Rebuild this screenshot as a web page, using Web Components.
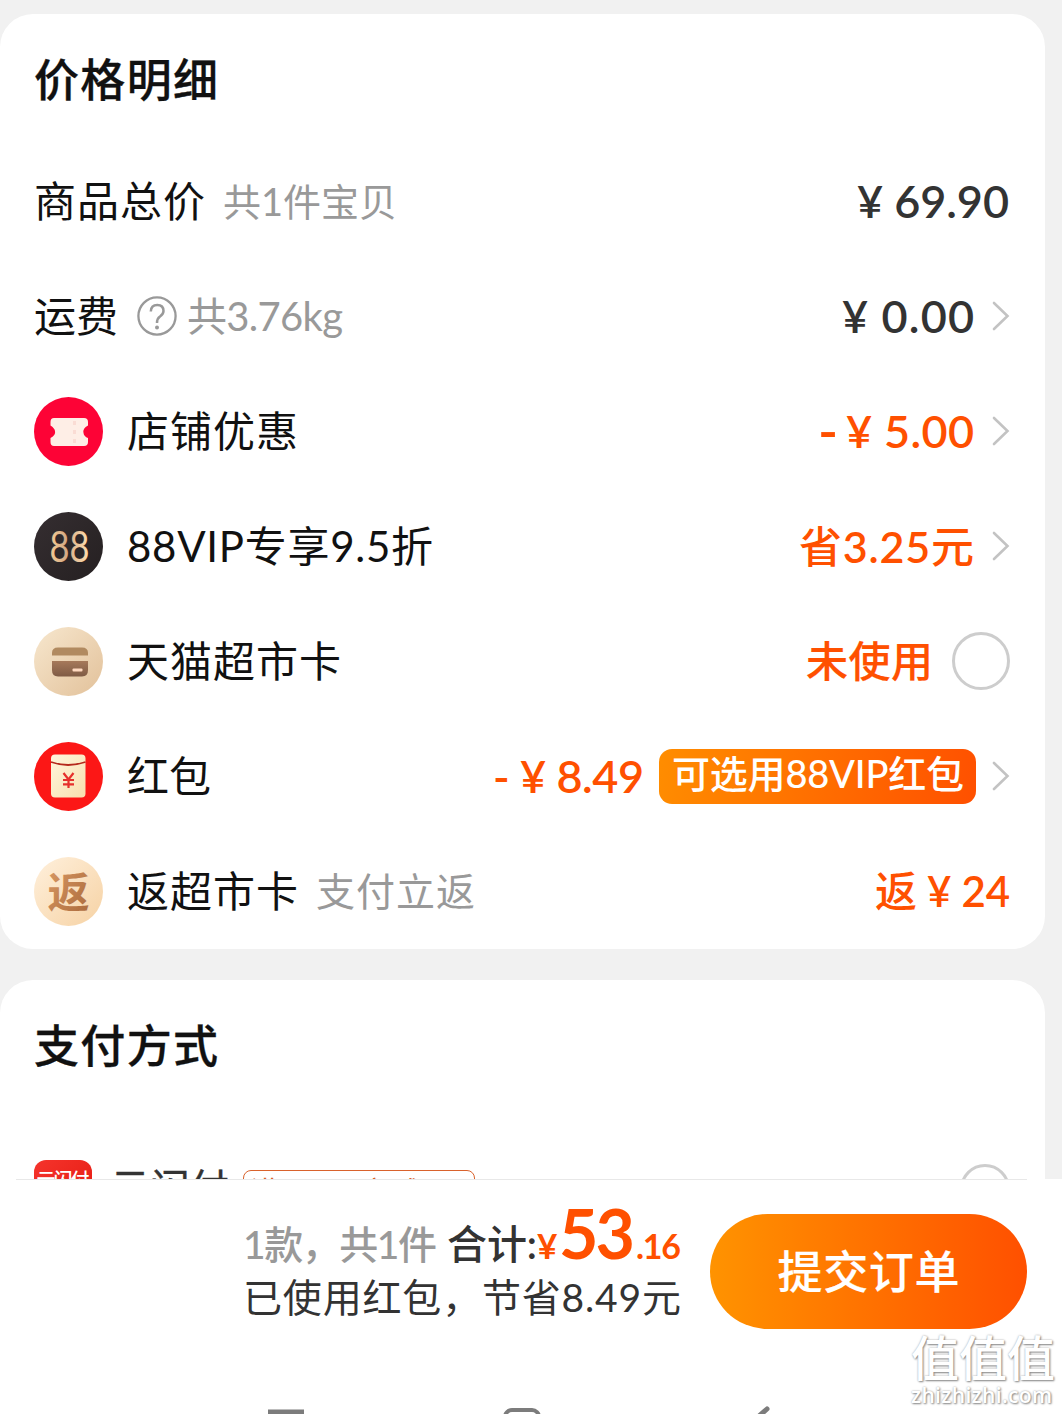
<!DOCTYPE html>
<html lang="zh-CN">
<head>
<meta charset="utf-8">
<title>确认订单</title>
<style>
html,body{margin:0;height:1414px;overflow:hidden;background:#f1f1f1}
body{font-family:Lato,"Noto Sans CJK SC",sans-serif;color:#111}
</style>
</head>
<body>
<order-page></order-page>
<script>
const define=(name,html,setup)=>customElements.define(name,class extends HTMLElement{
  connectedCallback(){
    if(this.shadowRoot)return;
    const t=document.createElement('template');t.innerHTML=html;
    this.attachShadow({mode:'open'}).append(t.content.cloneNode(true));
    if(setup)setup(this,this.shadowRoot);
  }
});

/* A line of text whose tracking is spread over the width in the "w" attribute.
   "bold" thickens the strokes by that many pixels. */
define('fit-text',`<style>
:host{display:block;flex:none;white-space:pre;line-height:1}
span{display:inline-block;white-space:pre}
::slotted(b){font-weight:600}
</style><span><slot></slot></span>`,(el,root)=>{
  const s=root.querySelector('span');
  const w=+el.getAttribute('w');
  el.style.fontSize=el.getAttribute('size')+'px';
  if(el.hasAttribute('weight'))el.style.fontWeight=el.getAttribute('weight');
  if(el.hasAttribute('bold'))el.style.webkitTextStroke=el.getAttribute('bold')+'px currentColor';
  const n=[...el.textContent].length;
  const ls=n>1?(w-s.getBoundingClientRect().width)/(n-1):0;
  s.style.letterSpacing=ls+'px';
  s.style.marginRight=-ls+'px';
  el.style.width=w+'px';
});

define('round-icon',`<style>:host{display:block;flex:none;width:69px;height:69px;margin-right:24px}svg{display:block}</style><div></div>`,(el,root)=>{
  const art={
    coupon:`<circle cx="34.5" cy="34.5" r="34.5" fill="#fd0336"/>
      <path d="M20 21H50Q54 21 54 25V28.500Q48.500 31 49.500 36Q50 39.500 54 41V45Q54 49 50 49H20Q16.500 49 16.500 45V41Q22 38 21 34Q20.500 31 16.500 28.500V25Q16.500 21 20 21Z" fill="#feeee6"/>
      <path d="M40.500 24V46" stroke="#fadcd4" stroke-width="3" stroke-dasharray="4 5"/>`,
    vip:`<defs><linearGradient id="g" x2="1" y2="1"><stop stop-color="#352e31"/><stop offset="1" stop-color="#252021"/></linearGradient>
      <linearGradient id="h" x2="1" y2="0"><stop stop-color="#f5cc93"/><stop offset=".4" stop-color="#d5aa86"/><stop offset="1" stop-color="#ffdfb0"/></linearGradient></defs>
      <circle cx="34.5" cy="34.5" r="34.5" fill="url(#g)"/>
      <text transform="translate(35.5 50) scale(.8 1)" text-anchor="middle" font-family="Lato" font-size="43" fill="url(#h)">88</text>`,
    card:`<defs><linearGradient id="g" x2="1" y2="1"><stop stop-color="#f7e7ce"/><stop offset="1" stop-color="#e2c19a"/></linearGradient>
      <linearGradient id="h" x2="0" y2="1"><stop stop-color="#a6795a"/><stop offset="1" stop-color="#7f5b45"/></linearGradient></defs>
      <circle cx="34.5" cy="34.5" r="34.5" fill="url(#g)"/>
      <path d="M18 28.500V26Q18 20.500 24 20.500H48Q54 20.500 54 26V28.500Z" fill="#b18a60"/>
      <path d="M18 34H54V43Q54 49.500 48 49.500H24Q18 49.500 18 43Z" fill="url(#h)"/>
      <rect x="38.500" y="41.500" width="10" height="3" rx="1" fill="#ffd9c0"/>`,
    packet:`<defs><linearGradient id="g" x2="1" y2="1"><stop stop-color="#fff6dd"/><stop offset="1" stop-color="#f8dfae"/></linearGradient></defs>
      <circle cx="34.5" cy="34.5" r="34.5" fill="#fc1716"/>
      <rect x="17" y="12.500" width="34.500" height="43" rx="4" fill="url(#g)"/>
      <path d="M17 20Q34 26 51.500 20" fill="none" stroke="#b5281c" stroke-width="1.800"/>
      <path d="M29.500 31L34.500 37.500L39.500 31M34.500 37V46M29 38H40M29 42.300H40" fill="none" stroke="#e6302c" stroke-width="2.200"/>`,
    back:`<defs><linearGradient id="g" x2="1" y2="1"><stop stop-color="#fff0dc"/><stop offset="1" stop-color="#f6d2a4"/></linearGradient>
      <linearGradient id="h" x2="1" y2="1"><stop stop-color="#dc9c66"/><stop offset="1" stop-color="#a9683a"/></linearGradient></defs>
      <circle cx="34.5" cy="34.5" r="34.5" fill="url(#g)"/>
      <text x="34.5" y="50.5" text-anchor="middle" font-family="Noto Sans CJK SC" font-weight="700" font-size="42" fill="url(#h)">返</text>`
  };
  root.querySelector('div').innerHTML='<svg width="69" height="69" viewBox="0 0 69 69">'+art[el.getAttribute('kind')]+'</svg>';
});

define('chevron-icon',`<style>:host{display:block;flex:none;margin-left:18px}svg{display:block}</style>
<svg width="18" height="32" viewBox="0 0 18 32"><path d="M2 3L15.500 16L2 29" fill="none" stroke="#c3c3c3" stroke-width="2.600" stroke-linecap="round"/></svg>`);

define('help-icon',`<style>:host{display:block;flex:none;margin:0 10px 0 19px}svg{display:block}</style>
<svg width="40" height="40" viewBox="0 0 40 40" fill="none" stroke="#999"><circle cx="20" cy="20" r="18.600" stroke-width="2.300"/><path d="M13.800 15.500Q14 9 20.300 9Q26.500 9 26.500 15Q26.500 18 23 20.500Q20 22.500 20 27" stroke-width="2.500"/><circle cx="20" cy="31.500" r="2" fill="#999" stroke="none"/></svg>`);

define('radio-dot',`<style>:host{display:block;flex:none;box-sizing:border-box;width:58px;height:58px;border:3px solid #cdcdcd;border-radius:50%;margin-left:19px}</style>`);

define('price-row',`<style>
:host{display:flex;height:115px;align-items:center;justify-content:space-between}
div{display:flex;align-items:center}
.end{color:var(--end,#ff5000)}
::slotted(.sub){color:#999;margin-left:18px}
</style><div><slot></slot></div><div class="end"><slot name="end"></slot></div>`);

define('end-group',`<style>:host{display:flex;align-items:center}</style><slot></slot>`);

define('promo-tag',`<style>:host{display:flex;box-sizing:border-box;width:317px;height:55px;margin-left:15px;padding:5px 0 0 13px;border-radius:13px;background:linear-gradient(100deg,#ff8d00,#ff5000);color:#fff}</style><slot></slot>`);

define('panel-card',`<style>
:host{display:block;box-sizing:border-box;width:1045px;background:#fff;border-radius:33px;padding:0 35px 0 34px}
header{display:flex;align-items:center;height:132px;margin-bottom:-2.500px}
</style><header><slot name="title"></slot></header><slot></slot>`);

define('pay-row',`<style>
:host{display:flex;align-items:flex-start;height:60px;padding-top:51px}
.logo{width:58px;height:58px;border-radius:12px;background:linear-gradient(135deg,#f5342c,#e3180f);color:#fff;display:flex;justify-content:center;padding-top:10px;box-sizing:border-box}
.name{color:#333;margin:8px 0 0 18px}
.tag{box-sizing:border-box;width:232px;height:46px;margin:10px 0 0 14px;padding:5px 0 0 6px;border:1px solid #d9622c;border-radius:8px;color:#d9622c}
.radio{box-sizing:border-box;width:50px;height:50px;border:3px solid #cdcdcd;border-radius:50%;margin:4px 0 0 auto}
</style>
<div class="logo"><fit-text w="53" size="19" weight="500">云闪付</fit-text></div>
<fit-text class="name" w="119" size="40" bold=".4">云闪付</fit-text>
<div class="tag"><fit-text w="216" size="30">满100元立减1元</fit-text></div>
<div class="radio"></div>`);

define('submit-button',`<style>
:host{display:block;flex:none}
button{all:unset;display:flex;box-sizing:border-box;padding-top:1px;align-items:center;justify-content:center;width:317px;height:115px;border-radius:58px;background:linear-gradient(90deg,#ff9300,#ff5000);color:#fff}
</style><button><slot></slot></button>`);

define('order-bar',`<style>
:host{display:flex;flex-direction:column;justify-content:space-between;height:235px;background:#fff}
.line{height:1px;background:#e8e8e8;margin:0 35px 0 16px}
.main{display:flex;justify-content:flex-end;padding:34px 35px 0 0;height:116px}
.sum{display:flex;flex-direction:column;width:467px;color:#333}
.total{display:flex;align-items:baseline;height:62px;margin-top:-15px}
.gray{color:#999}.or{color:#ff5000}
.nav{display:flex;height:8px;overflow:hidden;margin-top:auto}
svg{display:block}
</style>
<div class="line"></div>
<div class="main">
  <div class="sum">
    <div class="total">
      <fit-text class="gray" w="194" size="39" weight="500">1款，共1件</fit-text>
      <fit-text w="90" size="40" weight="500" style="margin-left:10px">合计<b>:</b></fit-text>
      <fit-text class="or" w="22" size="35" weight="700">¥</fit-text>
      <fit-text class="or" w="76" size="68" weight="700">53</fit-text>
      <fit-text class="or" w="45" size="34" weight="700" style="margin-left:1px">.16</fit-text>
    </div>
    <fit-text w="438" size="39" style="margin-top:17px">已使用红包，节省8.49元</fit-text>
  </div>
  <submit-button><fit-text w="182" size="45" weight="500" bold=".2">提交订单</fit-text></submit-button>
</div>
<div class="nav"><svg width="1062" height="8" viewBox="0 0 1062 8" fill="none" stroke="#7c7c7c" stroke-width="4"><path d="M268 6H304" stroke-width="5"/><rect x="505" y="4" width="34" height="34" rx="7"/><path d="M767 3L750 18" stroke-width="5" stroke-linecap="round"/></svg></div>`);

define('site-watermark',`<style>
:host{position:absolute;left:911px;top:1334px;width:150px;color:#fff;text-shadow:1px 1px 2px #888,0 0 2px #aaa}
div{display:flex;flex-direction:column;gap:3px}
.url{font-family:"Open Sans",sans-serif}
</style><div><fit-text w="144" size="48" weight="500">值值值</fit-text><fit-text class="url" w="141" size="21" weight="600">zhizhizhi.com</fit-text></div>`);

define('order-page',`<style>
:host{display:flex;flex-direction:column;position:relative;width:1062px;height:1414px;overflow:hidden}
main{display:flex;flex-direction:column;gap:31px;height:1165px;padding-top:14px;overflow:hidden}
panel-card{flex:none}
.dark{--end:#333}
</style>
<main>
<panel-card>
  <fit-text slot="title" w="184" size="45" weight="500" bold=".3">价格明细</fit-text>
  <price-row class="dark"><fit-text w="171" size="42">商品总价</fit-text><fit-text class="sub" w="174" size="38">共1件宝贝</fit-text>
    <end-group slot="end"><fit-text w="152" size="45" weight="600" style="margin-right:1px">¥ 69.90</fit-text></end-group></price-row>
  <price-row class="dark"><fit-text w="84" size="42">运费</fit-text><help-icon></help-icon><fit-text style="color:#999" w="156" size="40">共3.76kg</fit-text>
    <end-group slot="end"><fit-text w="132" size="45" weight="600">¥ 0.00</fit-text><chevron-icon></chevron-icon></end-group></price-row>
  <price-row><round-icon kind="coupon"></round-icon><fit-text w="171" size="42">店铺优惠</fit-text>
    <end-group slot="end"><fit-text w="19" size="54" weight="600">-</fit-text><fit-text w="128" size="45" weight="600" style="margin-left:9px">¥ 5.00</fit-text><chevron-icon></chevron-icon></end-group></price-row>
  <price-row><round-icon kind="vip"></round-icon><fit-text w="306" size="42">88VIP专享9.5折</fit-text>
    <end-group slot="end"><fit-text w="175" size="43" weight="500">省<b>3.25</b>元</fit-text><chevron-icon></chevron-icon></end-group></price-row>
  <price-row><round-icon kind="card"></round-icon><fit-text w="214" size="42">天猫超市卡</fit-text>
    <end-group slot="end"><fit-text w="127" size="42" weight="500" bold=".2">未使用</fit-text><radio-dot></radio-dot></end-group></price-row>
  <price-row><round-icon kind="packet"></round-icon><fit-text w="84" size="42">红包</fit-text>
    <end-group slot="end"><fit-text w="151" size="45" weight="600">- ¥ 8.49</fit-text><promo-tag><fit-text w="292" size="38" weight="500">可选用88VIP红包</fit-text></promo-tag><chevron-icon style="margin-left:16px"></chevron-icon></end-group></price-row>
  <price-row><round-icon kind="back"></round-icon><fit-text w="171" size="42">返超市卡</fit-text><fit-text class="sub" w="159" size="39">支付立返</fit-text>
    <end-group slot="end"><fit-text w="135" size="42" weight="500">返<b> ¥ 24</b></fit-text></end-group></price-row>
</panel-card>
<panel-card>
  <fit-text slot="title" w="184" size="45" weight="500" bold=".3" style="margin-top:2px">支付方式</fit-text>
  <pay-row></pay-row>
</panel-card>
</main>
<order-bar></order-bar>
<site-watermark></site-watermark>`);
</script>
</body>
</html>
